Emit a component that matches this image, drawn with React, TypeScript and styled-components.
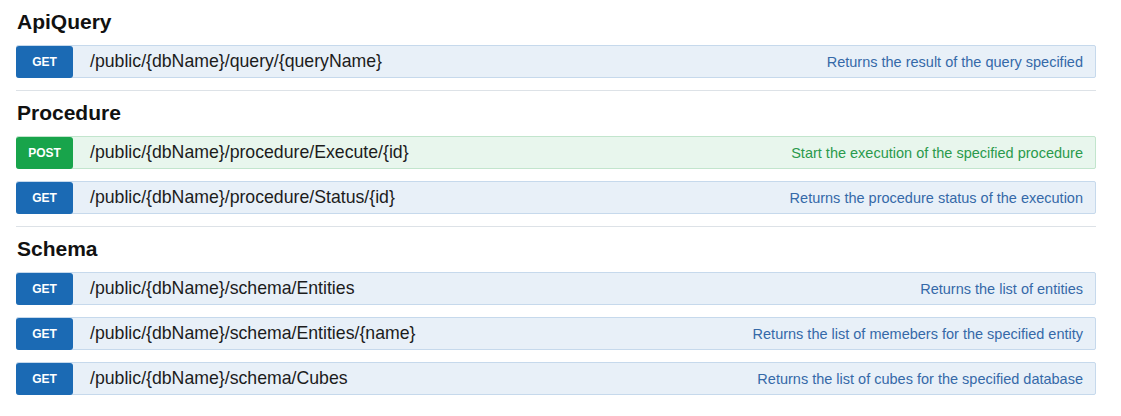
import styled, { createGlobalStyle } from "styled-components";

const GlobalStyle = createGlobalStyle`
  body {
    margin: 0;
    background: #ffffff;
    font-family: "Liberation Sans", Arial, sans-serif;
  }
`;

type Method = "GET" | "POST";

const palette = {
  GET: { badge: "#1b6ab4", bg: "#e8f0f8", border: "#c6d9ec", text: "#3569a8" },
  POST: { badge: "#18a44b", bg: "#e8f6ed", border: "#c2e5cd", text: "#2a9a4c" },
};

const Page = styled.div`
  width: 1080px;
  margin-left: 16px;
`;

const Section = styled.section<{ $last?: boolean }>`
  display: flex;
  flex-direction: column;
  gap: 12px;
  padding-bottom: ${({ $last }) => ($last ? "0" : "12px")};
  border-bottom: ${({ $last }) => ($last ? "none" : "1px solid #dde2e7")};
`;

const Title = styled.h3`
  margin: 0 0 2px;
  padding: 10px 0 0 1px;
  height: 21px;
  font-size: 21px;
  line-height: 24px;
  font-weight: 700;
  color: #111111;
`;

const Row = styled.div<{ $method: Method }>`
  display: flex;
  align-items: center;
  height: 31px;
  background: ${({ $method }) => palette[$method].bg};
  border: 1px solid ${({ $method }) => palette[$method].border};
  border-radius: 2px;
`;

const Badge = styled.span<{ $method: Method }>`
  display: flex;
  align-items: center;
  justify-content: center;
  width: 57px;
  height: 32px;
  margin: -1px 0 -1px -1px;
  background: ${({ $method }) => palette[$method].badge};
  border-radius: 3px;
  color: #ffffff;
  font-size: 12px;
  font-weight: 700;
`;

const Path = styled.span`
  flex: 1;
  margin-left: 17px;
  font-size: 17.7px;
  color: #1c1c1c;
`;

const Summary = styled.span<{ $method: Method }>`
  padding-right: 12px;
  font-size: 14.5px;
  color: ${({ $method }) => palette[$method].text};
`;

interface Endpoint {
  method: Method;
  path: string;
  summary: string;
}

const sections: { name: string; endpoints: Endpoint[] }[] = [
  {
    name: "ApiQuery",
    endpoints: [
      { method: "GET", path: "/public/{dbName}/query/{queryName}", summary: "Returns the result of the query specified" },
    ],
  },
  {
    name: "Procedure",
    endpoints: [
      { method: "POST", path: "/public/{dbName}/procedure/Execute/{id}", summary: "Start the execution of the specified procedure" },
      { method: "GET", path: "/public/{dbName}/procedure/Status/{id}", summary: "Returns the procedure status of the execution" },
    ],
  },
  {
    name: "Schema",
    endpoints: [
      { method: "GET", path: "/public/{dbName}/schema/Entities", summary: "Returns the list of entities" },
      { method: "GET", path: "/public/{dbName}/schema/Entities/{name}", summary: "Returns the list of memebers for the specified entity" },
      { method: "GET", path: "/public/{dbName}/schema/Cubes", summary: "Returns the list of cubes for the specified database" },
    ],
  },
];

export default function App() {
  return (
    <>
      <GlobalStyle />
      <Page>
        {sections.map((s, i) => (
          <Section key={s.name} $last={i === sections.length - 1}>
            <Title>{s.name}</Title>
            {s.endpoints.map((e) => (
              <Row key={e.path} $method={e.method}>
                <Badge $method={e.method}>{e.method}</Badge>
                <Path>{e.path}</Path>
                <Summary $method={e.method}>{e.summary}</Summary>
              </Row>
            ))}
          </Section>
        ))}
      </Page>
    </>
  );
}
